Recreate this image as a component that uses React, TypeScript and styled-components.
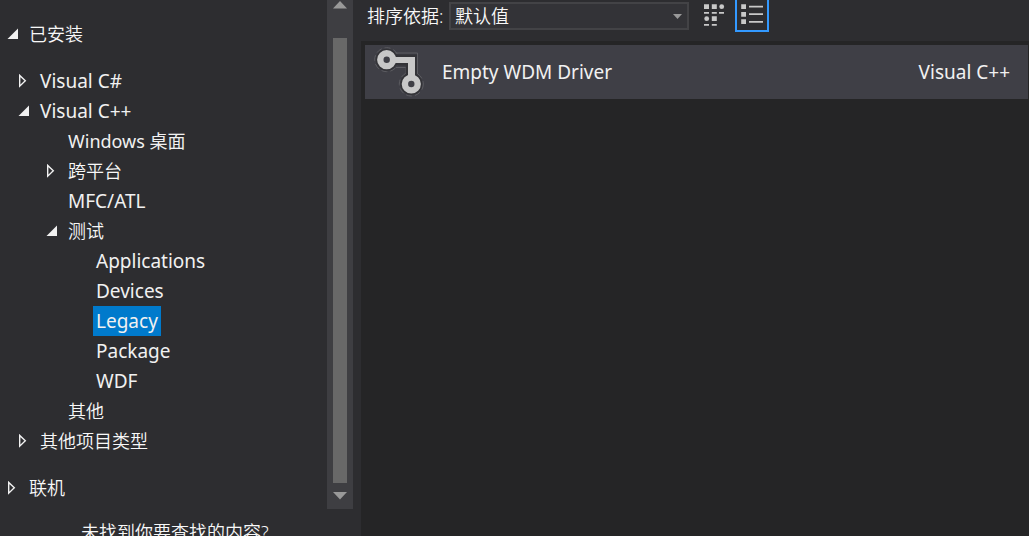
import React from "react";
import styled, { createGlobalStyle } from "styled-components";

const GlobalStyle = createGlobalStyle`
  *, *::before, *::after { box-sizing: border-box; }
  body {
    margin: 0;
    background: #2d2d30;
    color: #f8f8f8;
    font: 350 18px/30px "Noto Sans", "Noto Sans CJK SC", sans-serif;
  }
  button, select { font: inherit; color: inherit; }
`;

const Dialog = styled.div`
  display: grid;
  grid-template-columns: 361px 1fr;
  height: 100vh;
  overflow: hidden;
`;

const Sidebar = styled.aside`
  display: flex;
  flex-direction: column;
  min-height: 0;
`;

const TreeArea = styled.div`
  display: flex;
  flex: none;
  padding-right: 8px;
`;

const Tree = styled.nav`
  flex: 1;
  padding: 19px 0 6px;
`;

const Group = styled.ul<{ $spaced?: boolean }>`
  list-style: none;
  margin: 0;
  padding: ${(p) => (p.$spaced ? "17px 0" : "0")};
`;

const indents = [7, 18, 46, 74];

const Row = styled.button<{ $level: number }>`
  display: flex;
  align-items: center;
  gap: 7px;
  width: 100%;
  height: 30px;
  padding: 0 0 0 ${(p) => indents[p.$level]}px;
  border: 0;
  background: none;
  text-align: left;
  white-space: nowrap;
`;

const Marker = styled.svg`
  flex: none;
  width: 12px;
  height: 14px;
`;

type Script = "latin" | "mixed" | "cjk";

const Label = styled.span<{ $selected?: boolean; $script: Script }>`
  height: 30px;
  padding: 0 3px;
  color: ${(p) => (p.$script === "cjk" ? "#f8f8f8" : "#f1f1f1")};
  font-size: ${(p) => (p.$script === "latin" ? 19 : 18)}px;
  font-weight: ${(p) => (p.$script === "cjk" ? 350 : 400)};
  background: ${(p) => (p.$selected ? "#007acc" : "transparent")};
`;

const ScrollTrack = styled.div`
  display: flex;
  flex-direction: column;
  align-items: center;
  width: 26px;
  background: #3e3e42;
`;

const ScrollArrow = styled.svg`
  flex: none;
  width: 14px;
  height: 26px;
`;

const ScrollThumb = styled.div`
  flex: 1;
  width: 14px;
  margin-top: 12px;
  background: #686868;
`;

const Hint = styled.p`
  margin: 0;
  padding: 8px 0 0 81px;
`;

const Main = styled.main`
  display: flex;
  flex-direction: column;
  min-width: 0;
`;

const Toolbar = styled.div`
  display: flex;
  align-items: flex-start;
  height: 41px;
  padding-left: 6px;
`;

const SortLabel = styled.label`
  width: 82px;
  padding-top: 1px;
  white-space: nowrap;
`;

const SelectBox = styled.div`
  display: grid;
  align-items: center;
  width: 240px;
  margin: 2px 12px 0 0;
  > * { grid-area: 1 / 1; }
`;

const Select = styled.select`
  appearance: none;
  width: 100%;
  height: 28px;
  padding: 0 24px 0 4px;
  border: 2px solid #434346;
  border-radius: 0;
  background: #333337;
  line-height: 24px;
`;

const SelectArrow = styled.svg`
  justify-self: end;
  width: 9px;
  height: 5px;
  margin-right: 7px;
  pointer-events: none;
`;

const ViewButton = styled.button<{ $active?: boolean }>`
  width: 34px;
  height: 32px;
  padding: 0;
  border: 2px solid ${(p) => (p.$active ? "#3399ff" : "transparent")};
  border-top: 0;
  background: none;
  svg { display: block; }
`;

const Templates = styled.ul`
  flex: 1;
  list-style: none;
  margin: 0;
  padding: 4px 1px 0 4px;
  background: #252526;
`;

const Template = styled.li`
  display: flex;
  align-items: center;
  height: 54px;
  padding: 0 18px 0 8px;
  background: #3f3f46;
  color: #f1f1f1;
  font-size: 19px;
  font-weight: 400;
`;

const TemplateIcon = styled.svg`
  flex: none;
  width: 54px;
  height: 54px;
  margin-right: 15px;
`;

const TemplateName = styled.span`
  flex: 1;
`;

type ItemProps = {
  level: number;
  label: string;
  state?: "open" | "closed";
  selected?: boolean;
  children?: React.ReactNode;
};

function scriptOf(text: string): Script {
  if (/^[\x20-\x7e]+$/.test(text)) return "latin";
  return /[A-Za-z]/.test(text) ? "mixed" : "cjk";
}

function Item({ level, label, state, selected, children }: ItemProps) {
  return (
    <li>
      <Row type="button" $level={level} aria-expanded={state && state === "open"}>
        <Marker viewBox="0 0 12 14" aria-hidden="true">
          {state === "open" && <path d="M11 1.500v10.500H0.500z" fill="#f1f1f1" />}
          {state === "closed" && (
            <path d="M1.700 1.400v10.800L7.300 6.800z" fill="none" stroke="#f1f1f1" strokeWidth="1.400" />
          )}
        </Marker>
        <Label $selected={selected} $script={scriptOf(label)}>{label}</Label>
      </Row>
      {children}
    </li>
  );
}

export default function App() {
  return (
    <Dialog>
      <GlobalStyle />
      <Sidebar>
        <TreeArea>
          <Tree>
            <Group>
              <Item level={0} label="已安装" state="open">
                <Group $spaced>
                  <Item level={1} label="Visual C#" state="closed" />
                  <Item level={1} label="Visual C++" state="open">
                    <Group>
                      <Item level={2} label="Windows 桌面" />
                      <Item level={2} label="跨平台" state="closed" />
                      <Item level={2} label="MFC/ATL" />
                      <Item level={2} label="测试" state="open">
                        <Group>
                          <Item level={3} label="Applications" />
                          <Item level={3} label="Devices" />
                          <Item level={3} label="Legacy" selected />
                          <Item level={3} label="Package" />
                          <Item level={3} label="WDF" />
                        </Group>
                      </Item>
                      <Item level={2} label="其他" />
                    </Group>
                  </Item>
                  <Item level={1} label="其他项目类型" state="closed" />
                </Group>
              </Item>
              <Item level={0} label="联机" state="closed" />
            </Group>
          </Tree>
          <ScrollTrack aria-hidden="true">
            <ScrollArrow viewBox="0 0 14 26">
              <path d="M0 8.500L7 1l7 7.500z" fill="#999" />
            </ScrollArrow>
            <ScrollThumb />
            <ScrollArrow viewBox="0 0 14 26">
              <path d="M0 9h14L7 16.500z" fill="#999" />
            </ScrollArrow>
          </ScrollTrack>
        </TreeArea>
        <Hint>未找到你要查找的内容?</Hint>
      </Sidebar>
      <Main>
        <Toolbar>
          <SortLabel htmlFor="sort">排序依据:</SortLabel>
          <SelectBox>
            <Select id="sort" defaultValue="default">
              <option value="default">默认值</option>
            </Select>
            <SelectArrow viewBox="0 0 9 5" aria-hidden="true">
              <path d="M0 0h9L4.500 5z" fill="#999" />
            </SelectArrow>
          </SelectBox>
          <ViewButton type="button" aria-label="Medium icons">
            <svg width="30" height="30" viewBox="0 0 30 30" fill="#c8c8c8">
              <path d="M1 4.200h5v4.800H1zM8.800 4.200h5v4.800h-5zM1 12h5v1.800H1zM8.800 12h5v1.800h-5zM16 12h5v1.800h-5zM8.800 16.300h5V21h-5zM1 24h5v1.800H1zM8.800 24h5v1.800h-5z" />
              <circle cx="18.700" cy="6.700" r="2.400" />
              <circle cx="3.700" cy="18.700" r="2.400" />
            </svg>
          </ViewButton>
          <ViewButton type="button" aria-label="Small icons" $active>
            <svg width="30" height="30" viewBox="0 0 30 30" fill="#c8c8c8">
              <path d="M4.200 4.200H9V9H4.200zM4.200 12H9v4.700H4.200zM4.200 19.200H9V24H4.200zM12 5.800h14v1.800H12zM12 13.300h14v1.800H12zM12 20.900h14v1.800H12z" />
            </svg>
          </ViewButton>
        </Toolbar>
        <Templates>
          <Template>
            <TemplateIcon viewBox="0 0 54 54" aria-hidden="true">
              <g fill="none" stroke="#5c5c61" strokeWidth="1">
                <circle cx="13.700" cy="14.700" r="12" strokeDasharray="6 3" />
                <circle cx="38.300" cy="39" r="12" strokeDasharray="6 3" />
                <path d="M22 8h22.500V29M23 22.500h10V29" />
              </g>
              <path d="M14 15h24.300v24" fill="none" stroke="#333337" strokeWidth="11" />
              <circle cx="13.700" cy="14.700" r="11" fill="#333337" />
              <circle cx="38.300" cy="39" r="11" fill="#333337" />
              <path d="M14 12h28v27h-7V18H14z" fill="#c8c8c8" />
              <circle cx="13.700" cy="14.700" r="6.400" fill="#3f3f46" stroke="#c8c8c8" strokeWidth="6.400" />
              <circle cx="38.300" cy="39" r="6.400" fill="#3f3f46" stroke="#c8c8c8" strokeWidth="6.400" />
            </TemplateIcon>
            <TemplateName>Empty WDM Driver</TemplateName>
            <span>Visual C++</span>
          </Template>
        </Templates>
      </Main>
    </Dialog>
  );
}
